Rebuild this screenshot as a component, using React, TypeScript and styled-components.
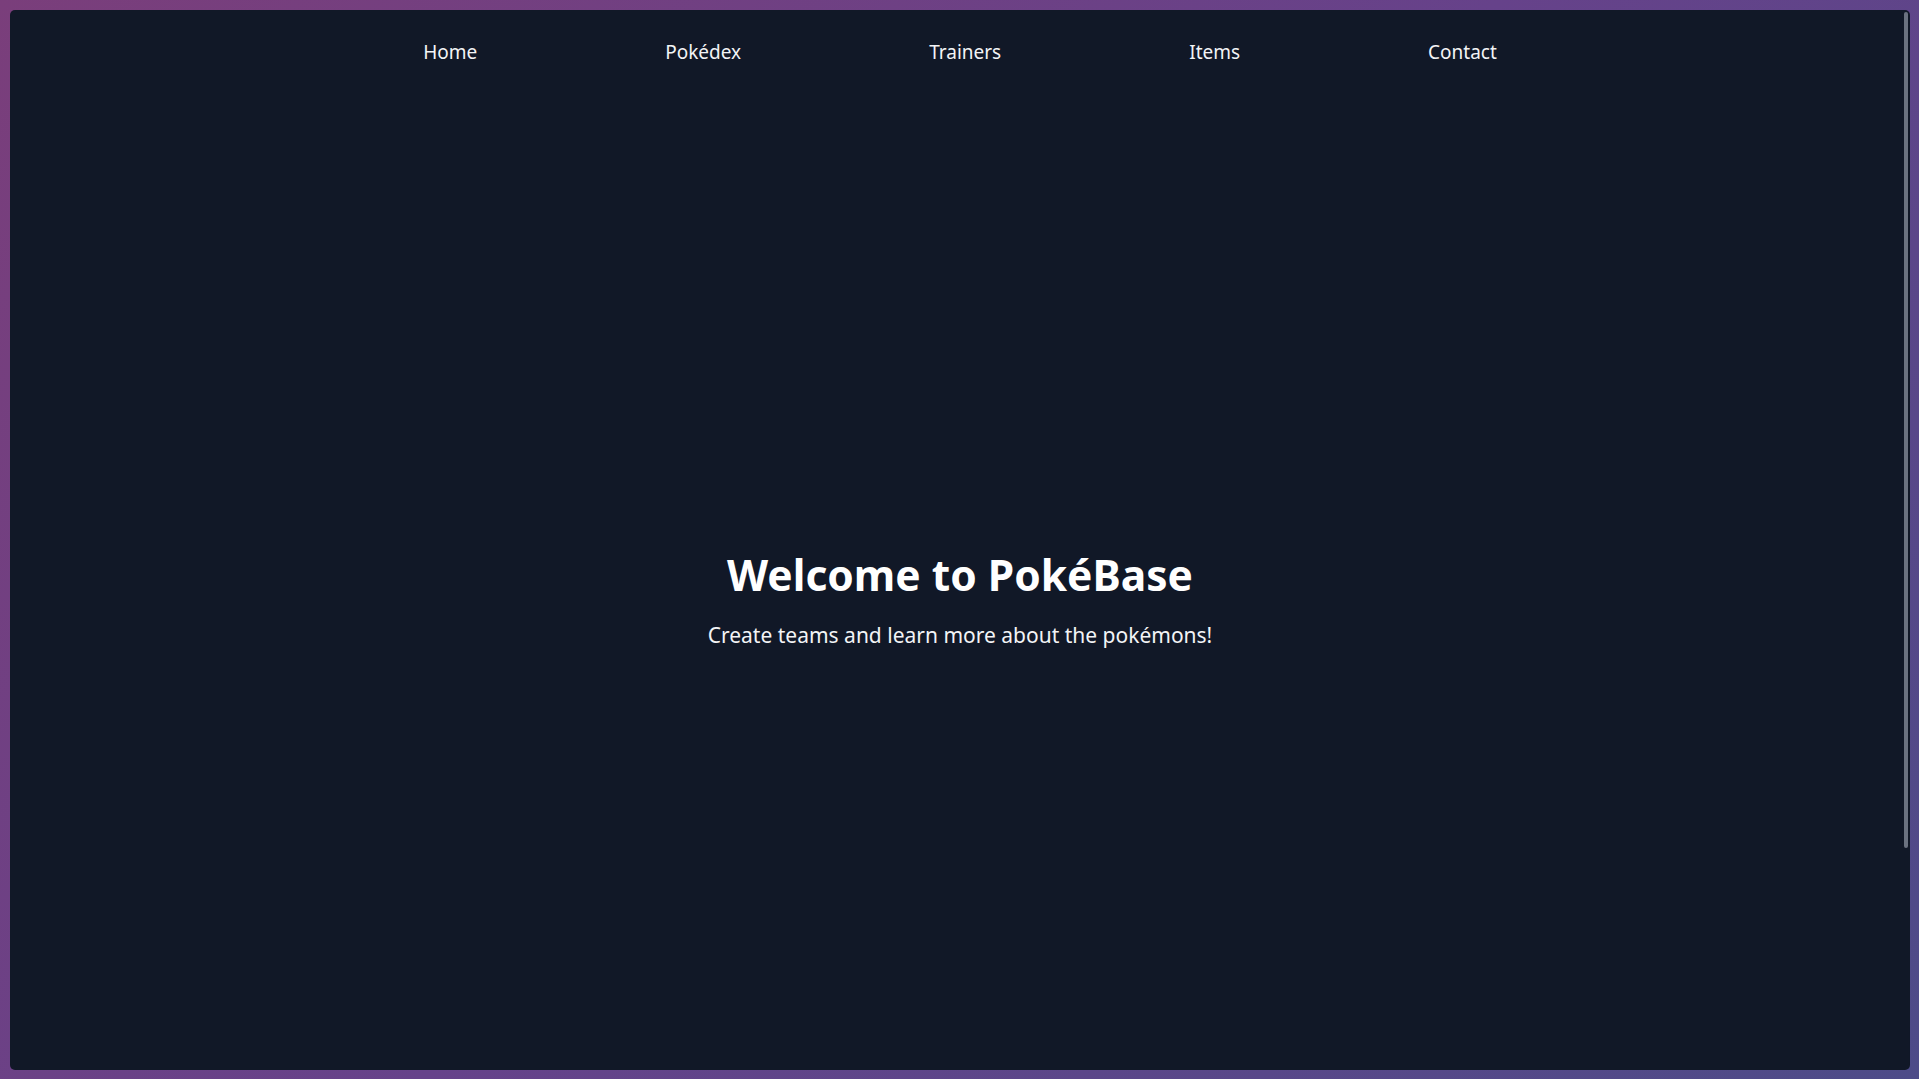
import React from "react";
import styled, { createGlobalStyle } from "styled-components";

const GlobalStyle = createGlobalStyle`
  html, body {
    margin: 0;
    padding: 0;
    height: 100%;
    overflow: hidden;
  }
  body {
    font-family: "Noto Sans", "Open Sans", "Liberation Sans", sans-serif;
    background: linear-gradient(135deg, #7a3e7b 0%, #66428a 50%, #4d4b88 100%);
  }
  #root {
    height: 100%;
  }
`;

const Frame = styled.div`
  box-sizing: border-box;
  height: 100vh;
  padding: 10px 9px 9px 10px;
  display: flex;
`;

const PanelWrap = styled.div`
  flex: 1;
  position: relative;
  display: flex;
`;

const Panel = styled.div`
  flex: 1;
  background: #111827;
  border-radius: 5px;
  overflow-y: auto;
  color: #ffffff;
  scrollbar-width: none;
  &::-webkit-scrollbar {
    display: none;
  }
`;

const ScrollThumb = styled.div`
  position: absolute;
  top: 2px;
  right: 2px;
  width: 4px;
  height: 836px;
  background: #6b7280;
  border-radius: 2px;
  pointer-events: none;
`;

const Nav = styled.nav`
  height: 84px;
  display: flex;
  justify-content: center;
  align-items: center;
  gap: 188px;
`;

const NavLink = styled.a`
  color: #f3f4f6;
  font-size: 19px;
  text-decoration: none;
  cursor: pointer;
`;

const Hero = styled.section`
  height: 1010px;
  display: flex;
  flex-direction: column;
  align-items: center;
  justify-content: center;
  gap: 21px;
`;

const Title = styled.h1`
  margin: 0;
  font-size: 42.5px;
  font-weight: 700;
  line-height: 1.2;
  color: #ffffff;
`;

const Subtitle = styled.p`
  margin: 0;
  font-size: 21px;
  color: #f3f4f6;
`;

const Spacer = styled.div`
  height: 246px;
`;

const links = ["Home", "Pokédex", "Trainers", "Items", "Contact"];

export default function App() {
  return (
    <>
      <GlobalStyle />
      <Frame>
        <PanelWrap>
          <Panel>
            <Nav>
              {links.map((l) => (
                <NavLink key={l}>{l}</NavLink>
              ))}
            </Nav>
            <Hero>
              <Title>Welcome to PokéBase</Title>
              <Subtitle>Create teams and learn more about the pokémons!</Subtitle>
            </Hero>
            <Spacer />
          </Panel>
          <ScrollThumb />
        </PanelWrap>
      </Frame>
    </>
  );
}
